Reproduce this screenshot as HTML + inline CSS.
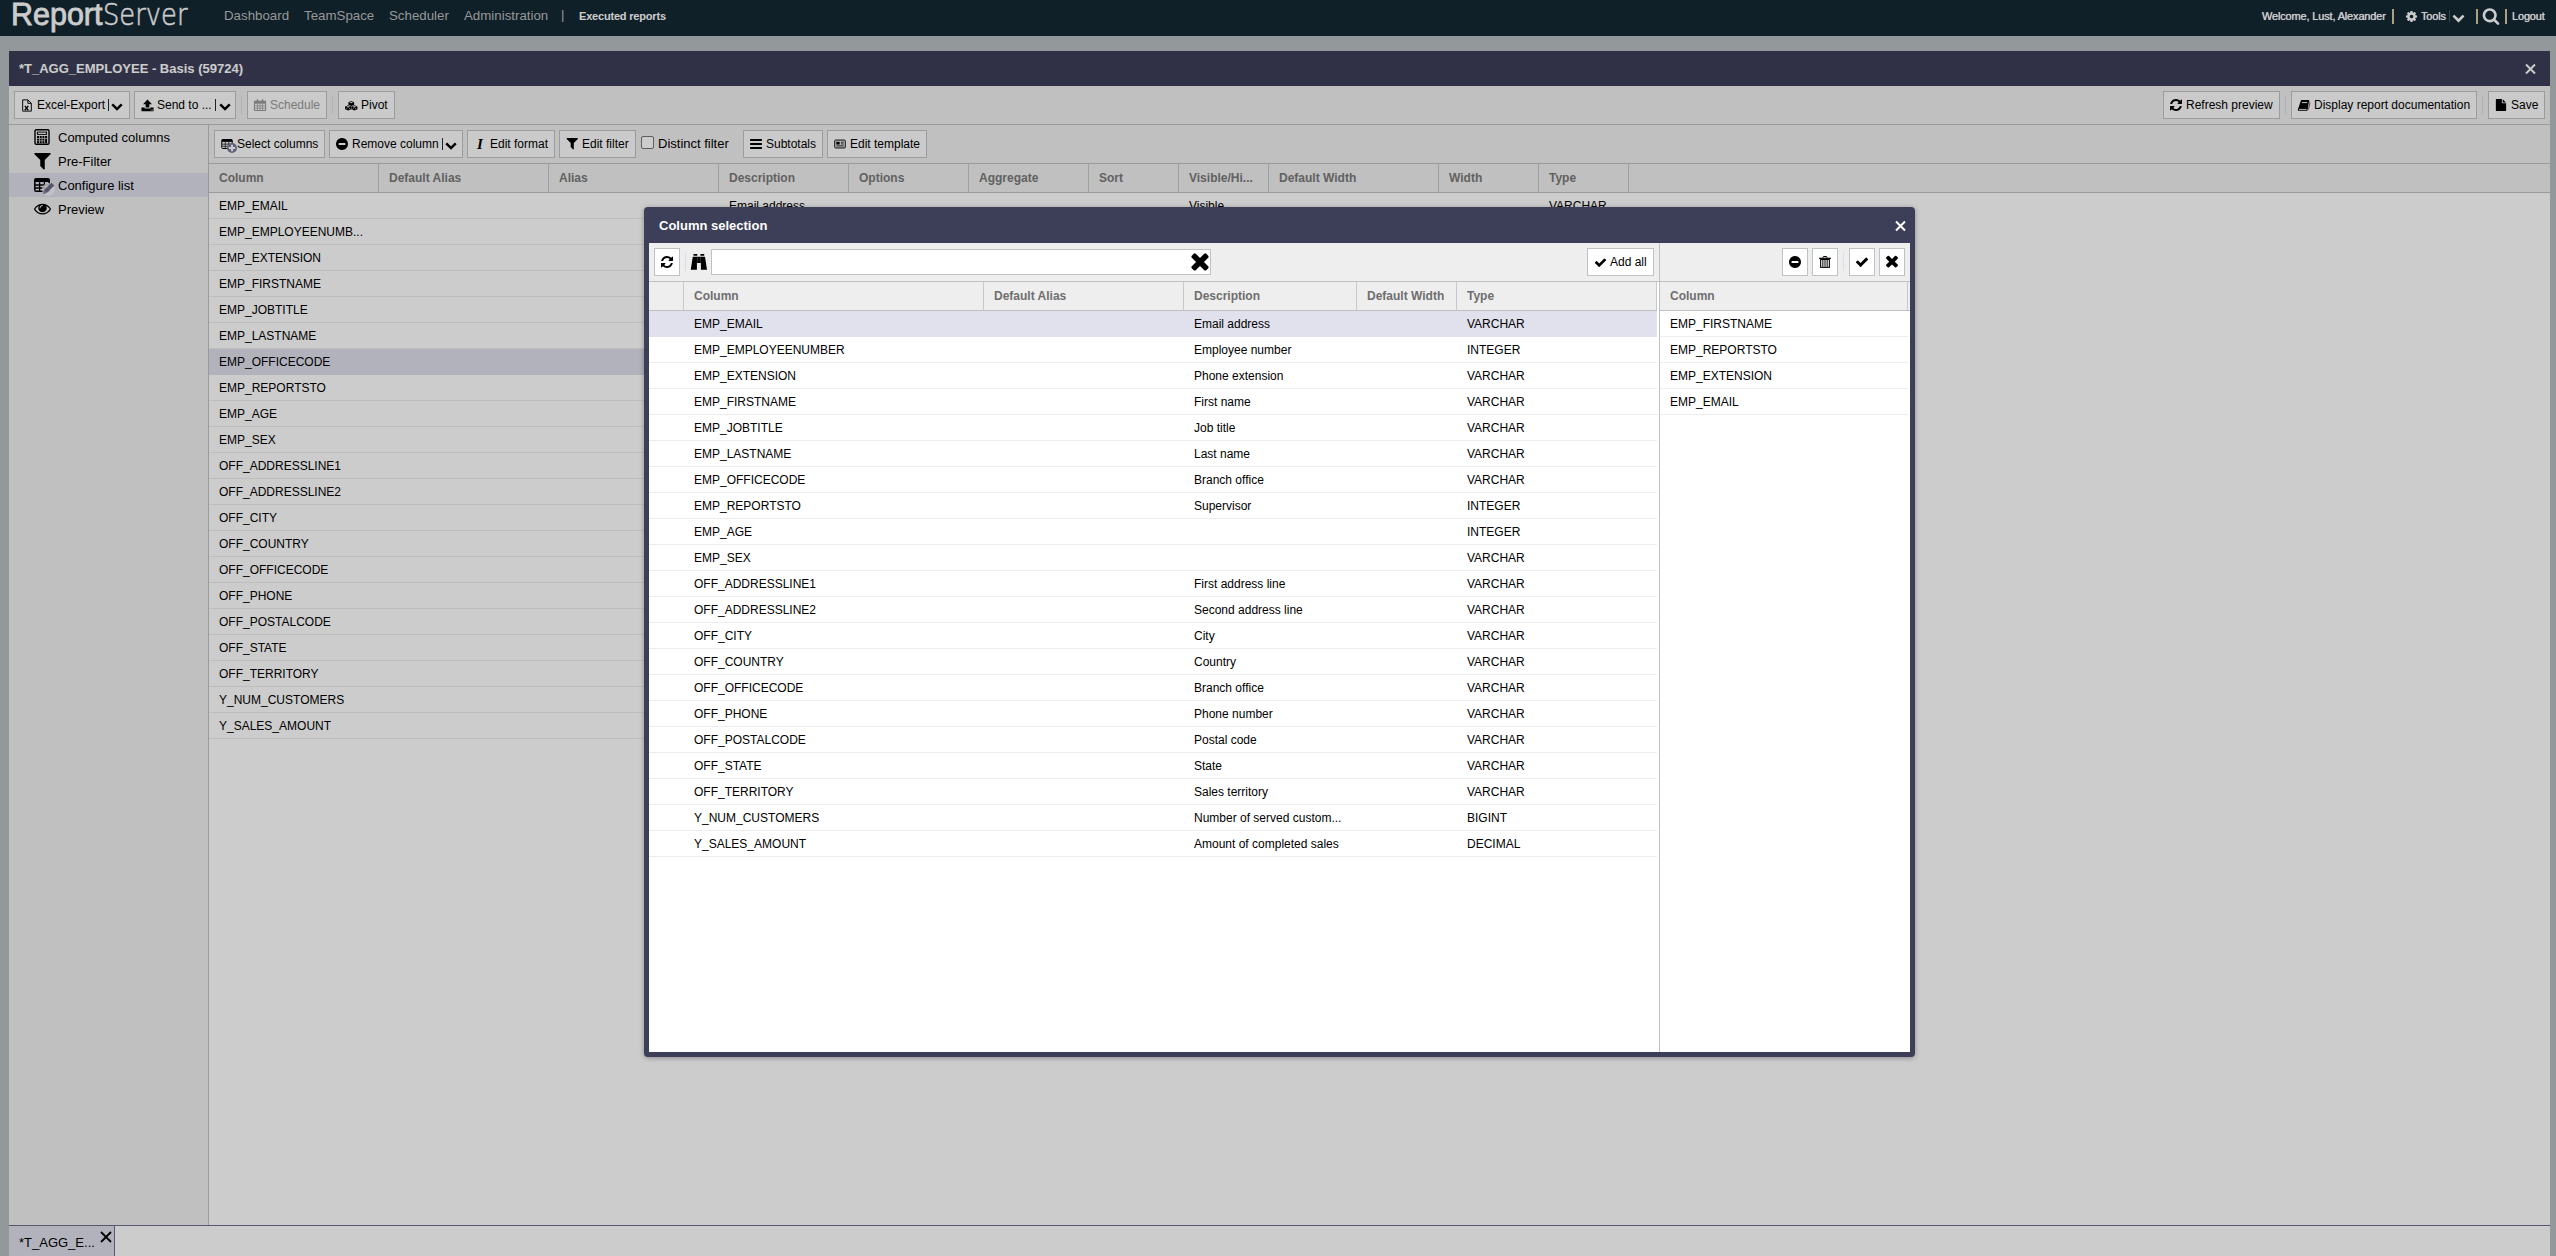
<!DOCTYPE html><html><head><meta charset="utf-8"><title>ReportServer</title><style>
*{box-sizing:border-box;margin:0;padding:0}
html,body{width:2556px;height:1256px;overflow:hidden}
body{position:relative;background:#b8bec2;font:12px "Liberation Sans",sans-serif;color:#000}
div,span,svg{position:absolute}
.ic{display:block;overflow:visible}
.t{white-space:nowrap;line-height:16px;height:16px}
#hdr{left:0;top:0;width:2556px;height:36px;background:#132834}
#hdr .nav{font-size:13.300px;color:#bdbdbd;top:8px}
#hdr .w{font-size:11px;color:#fff;top:8px;letter-spacing:-.16px;text-shadow:0 0 .7px #fff}
#main{left:9px;top:51px;width:2541px;height:1205px;background:#fff}
#ttl{left:0;top:0;width:2541px;height:35px;background:#3d3e58}
#tb{left:0;top:35px;width:2541px;height:39px;background:#f0f0f0;border-bottom:1px solid #bfc2c4}
.btn{height:28px;border:1px solid #c0c5c9;background:#fdfdfd}
.btn.dis .t{color:#9a9a9a}
.sep{width:1px;background:#dcdce6}
#nav{left:0;top:74px;width:200px;height:1100px;background:#f0f0f0;border-right:1px solid #bfc2c4}
#nav .it{left:0;width:199px;height:24px}
#nav .it .t{left:49px;top:5px;font-size:13px}
#nav .sel{background:#dfdfec}
#ra{left:200px;top:74px;width:2341px;height:1100px;background:#fff}
#ratb{left:0;top:0;width:2341px;height:39px;background:#f0f0f0;border-bottom:1px solid #bfc2c4}
.gh{background:#f0f0f0;border-bottom:1px solid #bfc2c4;height:29px}
.gh .c{top:0;height:28px;border-right:1px solid #c6c9cb}
.gh .c .t{left:10px;top:6px;font-weight:bold;color:#7a7a7a}
.row{height:26px;border-bottom:1px solid #ededed}
.row .t{top:5px}
#tabs{left:0;top:1174px;width:2541px;height:31px;background:#fff;border-top:1px solid #6c6e8c}
#mask{left:0;top:0;width:2556px;height:1256px;background:rgba(0,0,0,.2)}
#dlg{left:644px;top:207px;width:1271px;height:850px;background:#3d3e58;border-radius:4px;box-shadow:0 1px 5px rgba(0,0,0,.32)}
#dbody{left:5px;top:36px;width:1261px;height:809px;background:#fff}
.dtb{top:0;height:39px;background:#eee;border-bottom:1px solid #bfc2c4}
.wb{height:28px;border:1px solid #bcc2c6;background:#fff}
</style></head><body>
<div id="hdr">
<span class="t" style="left:11px;top:-4px;height:36px;font:31.500px/36px 'Liberation Sans',sans-serif;color:#fff;-webkit-text-stroke:.8px #fff;transform-origin:0 50%;transform:scaleX(.967)">Report</span>
<span class="t" style="left:103px;top:-3px;height:36px;font:200 30.500px/36px 'DejaVu Sans','Liberation Sans',sans-serif;color:#fff;-webkit-text-stroke:.55px #fff;transform-origin:0 50%;transform:scaleX(.845)">Server</span>
<span class="t nav" style="left:224px">Dashboard</span>
<span class="t nav" style="left:304px">TeamSpace</span>
<span class="t nav" style="left:389px">Scheduler</span>
<span class="t nav" style="left:464px">Administration</span>
<span class="t nav" style="left:561px;top:7px">|</span>
<span class="t w" style="left:579px;top:8px;font-weight:bold;letter-spacing:-.19px;text-shadow:none">Executed reports</span>
<span class="t w" style="left:2262px">Welcome, Lust, Alexander</span>
<div style="left:2392px;top:9px;width:2px;height:15px;background:#d9c9a3"></div>
<svg class="ic" style="left:2405px;top:10px;width:13px;height:13px;" viewBox="0 0 1792 1792"><path fill="#fff" d="M1152 896q0-106-75-181t-181-75-181 75-75 181 75 181 181 75 181-75 75-181zm512-109v222q0 12-8 23t-20 13l-185 28q-19 54-39 91 35 50 107 138 10 12 10 25t-9 23q-27 37-99 108t-94 71q-12 0-26-9l-138-108q-44 23-91 38-16 136-29 186-7 28-36 28h-222q-14 0-24.500-8.500t-11.500-21.500l-28-184q-49-16-90-37l-141 107q-10 9-25 9-14 0-25-11-126-114-165-168-7-10-7-23 0-12 8-23 15-21 51-66.500t54-70.500q-27-50-41-99l-183-27q-13-2-21-12.500t-8-23.500v-222q0-12 8-23t19-13l186-28q14-46 39-92-40-57-107-138-10-12-10-24 0-10 9-23 26-36 98.500-107.500t94.500-71.500q13 0 26 10l138 107q44-23 91-38 16-136 29-186 7-28 36-28h222q14 0 24.500 8.500t11.500 21.500l28 184q49 16 90 37l142-107q9-9 24-9 13 0 25 10 129 119 165 170 7 8 7 22 0 12-8 23-15 21-51 66.500t-54 70.500q26 50 41 98l183 28q13 2 21 12.500t8 23.500z"/></svg>
<span class="t w" style="left:2421px">Tools</span>
<div style="left:2449px;top:10px;width:1px;height:12px;background:#41525c"></div>
<svg class="ic" style="left:2452px;top:11px;width:13px;height:13px;" viewBox="0 0 1792 1792"><path fill="#fff" d="M1683 808l-742 741q-19 19-45 19t-45-19l-742-741q-19-19-19-45.500t19-45.500l166-165q19-19 45-19t45 19l531 531 531-531q19-19 45-19t45 19l166 165q19 19 19 45.500t-19 45.500z"/></svg>
<div style="left:2476px;top:9px;width:2px;height:15px;background:#d9c9a3"></div>
<svg class="ic" style="left:2482px;top:7px;width:18px;height:18px;" viewBox="0 0 1792 1792"><path fill="#fff" d="M1216 832q0-185-131.500-316.500t-316.500-131.500-316.500 131.500-131.500 316.500 131.500 316.500 316.500 131.500 316.500-131.500 131.500-316.500zm512 832q0 52-38 90t-90 38q-54 0-90-38l-343-342q-179 124-399 124-143 0-273.500-55.500t-225-150-150-225-55.500-273.500 55.500-273.500 150-225 225-150 273.500-55.500 273.500 55.500 225 150 150 225 55.500 273.500q0 220-124 399l343 343q37 37 37 90z"/></svg>
<div style="left:2505px;top:9px;width:2px;height:15px;background:#d9c9a3"></div>
<span class="t w" style="left:2512px">Logout</span>
</div>
<div id="main">
<div id="ttl"><span class="t" style="left:10px;top:10px;font-size:13px;font-weight:bold;color:#fff">*T_AGG_EMPLOYEE - Basis (59724)</span>
<svg class="ic" style="left:2516px;top:13px;width:11px;height:10px;" viewBox="0 0 11 10"><path d="M1 .5l9 9M10 .5l-9 9" stroke="#fff" stroke-width="2"/></svg>
</div>
<div id="tb">
<div class="btn" style="left:5px;top:5px;width:116px"><svg class="ic" style="left:6px;top:7px;width:12px;height:13px;" viewBox="1 .5 13 15"><path d="M2.5 1.5h6l4 4v9h-10z" fill="none" stroke="#000" stroke-width="1.1"/><path d="M8.5 1.5v4h4" fill="none" stroke="#000" stroke-width="1.1"/><path d="M5 8.5l4 5M9 8.5l-4 5" stroke="#000" stroke-width="1.5"/></svg><span class="t" style="left:22px;top:5px">Excel-Export</span><div style="left:93px;top:7px;width:1px;height:12px;background:#2a2a2a"></div><svg class="ic" style="left:96px;top:11px;width:12px;height:8.2px;" viewBox="0 0 12.500 8.500"><path d="M1.300 1.300L6.250 6.300l4.950-5" fill="none" stroke="#000" stroke-width="2.600"/></svg></div>
<div class="btn" style="left:125px;top:5px;width:102px"><svg class="ic" style="left:6px;top:7px;width:13px;height:13px;" viewBox="1 1 14 14"><path d="M8 1.500l4.800 5.200H10v3.500H6v-3.500H3.200z" fill="#000"/><path d="M1.500 10.100h3.400v1.200h6.200v-1.200h3.400v4.100h-13z" fill="#000"/><rect x="11.300" y="12.400" width="1.100" height=".9" fill="#ddd"/><rect x="12.900" y="12.400" width="1.100" height=".9" fill="#ddd"/></svg><span class="t" style="left:22px;top:5px">Send to ...</span><div style="left:80px;top:7px;width:1px;height:12px;background:#2a2a2a"></div><svg class="ic" style="left:83.6px;top:11px;width:12px;height:8.2px;" viewBox="0 0 12.500 8.500"><path d="M1.300 1.300L6.250 6.300l4.950-5" fill="none" stroke="#000" stroke-width="2.600"/></svg></div>
<div class="sep" style="left:232px;top:10px;height:18px"></div>
<div class="btn dis" style="left:238px;top:5px;width:80px"><svg class="ic" style="left:6px;top:7px;width:12px;height:12px;" viewBox="1 1 14 14"><path d="M1.5 3.5h13v11h-13z" fill="none" stroke="#9a9a9a" stroke-width="1.2"/><rect x="1.5" y="3.5" width="13" height="3" fill="#9a9a9a"/><rect x="4" y="1.3" width="2" height="3.4" rx=".8" fill="#9a9a9a"/><rect x="10" y="1.3" width="2" height="3.4" rx=".8" fill="#9a9a9a"/><path d="M1.5 9h13M1.5 11.7h13M5 6.5v8M8 6.5v8M11 6.5v8" stroke="#9a9a9a" stroke-width=".9"/></svg><span class="t" style="left:22px;top:5px">Schedule</span></div>
<div class="sep" style="left:323px;top:10px;height:18px"></div>
<div class="btn" style="left:329px;top:5px;width:57px"><svg class="ic" style="left:6px;top:8.5px;width:12.5px;height:9.5px;" viewBox="0 0 24 18"><path d="M12.0 0.0L17.5 2.2L17.5 7.2L12.0 9.5L6.5 7.2L6.5 2.2z" fill="#000"/><path d="M12.0 1.2L15.7 2.6L12.0 4.1L8.3 2.6z" fill="#e8f0f8"/><path d="M6.0 8.0L11.8 10.3L11.8 15.6L6.0 18.0L0.2 15.6L0.2 10.3z" fill="#000"/><path d="M6.0 9.3L9.9 10.7L6.0 12.3L2.1 10.7z" fill="#e8f0f8"/><path d="M18.0 8.0L23.8 10.3L23.8 15.6L18.0 18.0L12.2 15.6L12.2 10.3z" fill="#000"/><path d="M18.0 9.3L21.9 10.7L18.0 12.3L14.1 10.7z" fill="#e8f0f8"/><path d="M2.6 15.2L4.6 13.5M7.4 15.5L9.4 13.5" stroke="#dde6ee" stroke-width="1.500" fill="none"/><path d="M14.6 15.2L16.6 13.5M19.4 15.5L21.4 13.5" stroke="#dde6ee" stroke-width="1.500" fill="none"/></svg><span class="t" style="left:22px;top:5px">Pivot</span></div>
<div class="btn" style="left:2154px;top:5px;width:117px"><svg class="ic" style="left:4.8px;top:6.4px;width:14px;height:14px;" viewBox="0 0 1792 1792"><path fill="#000" d="M1639 1056q0 5-1 7-64 268-268 434.500t-478 166.500q-146 0-282.500-55t-243.500-157l-129 129q-19 19-45 19t-45-19-19-45v-448q0-26 19-45t45-19h448q26 0 45 19t19 45-19 45l-137 137q71 66 161 102t187 36q134 0 250-65t186-179q11-17 53-117 8-23 30-23h192q13 0 22.500 9.500t9.500 22.500zm25-800v448q0 26-19 45t-45 19h-448q-26 0-45-19t-19-45 19-45l138-138q-148-137-349-137-134 0-250 65t-186 179q-11 17-53 117-8 23-30 23h-199q-13 0-22.500-9.500t-9.500-22.500v-7q65-268 270-434.500t480-166.500q146 0 284 55.500t245 156.500l130-129q19-19 45-19t45 19 19 45z"/></svg><span class="t" style="left:22px;top:5px">Refresh preview</span></div>
<div class="sep" style="left:2276px;top:10px;height:18px"></div>
<div class="btn" style="left:2282px;top:5px;width:186px"><svg class="ic" style="left:5px;top:7px;width:14px;height:13px;" viewBox="0 0 14 13"><path d="M4.100 1H12.200L10.400 11.800H1.600Q.5 11.800 .9 10.500z" fill="#000"/><rect x="5" y="3.100" width="5.200" height="1" fill="#fdfdfd"/><rect x="2" y="9.900" width="7.600" height=".9" fill="#fdfdfd"/><path d="M12.400 2.600Q13 3.200 12.700 5L11.400 10.600" fill="none" stroke="#000" stroke-width=".6"/></svg><span class="t" style="left:22px;top:5px">Display report documentation</span></div>
<div class="sep" style="left:2473px;top:10px;height:18px"></div>
<div class="btn" style="left:2479px;top:5px;width:57px"><svg class="ic" style="left:6px;top:7px;width:12px;height:12px;" viewBox="0 0 1792 1792"><path fill="#000" d="M1152 512v-472q22 14 36 28l408 408q14 14 28 36h-472zm-128 32q0 40 28 68t68 28h544v1056q0 40-28 68t-68 28h-1344q-40 0-68-28t-28-68v-1600q0-40 28-68t68-28h800v544z"/></svg><span class="t" style="left:22px;top:5px">Save</span></div>
</div>
<div id="nav">
<div class="it" style="top:0"><svg class="ic" style="left:25px;top:4px;width:16px;height:16px;" viewBox="0 0 16 16"><rect x="1" y=".8" width="14" height="14.400" rx="1.200" fill="none" stroke="#000" stroke-width="1.400"/><rect x="3.400" y="3.100" width="9.200" height="2.300" fill="none" stroke="#000" stroke-width=".9"/><g fill="#000"><rect x="3" y="7" width="2" height="2"/><rect x="5.700" y="7" width="2" height="2"/><rect x="8.400" y="7" width="2" height="2"/><rect x="11.100" y="7" width="2" height="2"/><rect x="3" y="9.600" width="2" height="2"/><rect x="5.700" y="9.600" width="2" height="2"/><rect x="8.400" y="9.600" width="2" height="2"/><rect x="11.100" y="9.600" width="2" height="4.600"/><rect x="3" y="12.200" width="2" height="2"/><rect x="5.700" y="12.200" width="2" height="2"/><rect x="8.400" y="12.200" width="2" height="2"/></g></svg><span class="t">Computed columns</span></div>
<div class="it" style="top:24px"><svg class="ic" style="left:23px;top:1px;width:21px;height:21px;" viewBox="0 0 1792 1792"><path fill="#000" d="M1595 295q17 41-14 70l-493 493v742q0 42-39 59-13 5-25 5-27 0-45-19l-256-256q-19-19-19-45v-486l-493-493q-31-29-14-70 17-39 59-39h1280q42 0 59 39z"/></svg><span class="t">Pre-Filter</span></div>
<div class="it sel" style="top:48px"><svg class="ic" style="left:25px;top:4px;width:16px;height:16px;" viewBox="0 0 16 16"><rect x=".8" y="1.800" width="14.400" height="12.400" rx="1.300" fill="none" stroke="#000" stroke-width="1.500"/><rect x=".8" y="1.800" width="14.400" height="3.200" fill="#000"/><path d="M.8 8h14.400M.8 11h14.400M5.600 5v9M10.400 5v9" stroke="#000" stroke-width="1.300"/></svg><svg class="ic" style="left:33px;top:9px;width:13px;height:13px;" viewBox="0 0 13 13"><circle cx="6.500" cy="7.500" r="6.500" fill="#f4f4fa" opacity=".8"/><path d="M1 12l1.200-4L9.500.700l2.800 2.800L5 10.800z" fill="#6a6a86"/><path d="M1 12l1.200-4 2.800 2.800z" fill="#8c8ca4"/></svg><span class="t">Configure list</span></div>
<div class="it" style="top:72px"><svg class="ic" style="left:25px;top:3px;width:17px;height:17px;" viewBox="0 0 1792 1792"><path fill="#000" d="M1664 960q-152-236-381-353 61 104 61 225 0 185-131.500 316.500t-316.500 131.500-316.500-131.500-131.500-316.500q0-121 61-225-229 117-381 353 133 205 333.500 326.500t434.500 121.500 434.500-121.500 333.500-326.500zm-720-384q0-20-14-34t-34-14q-125 0-214.500 89.500t-89.500 214.500q0 20 14 34t34 14 34-14 14-34q0-86 61-147t147-61q20 0 34-14t14-34zm848 384q0 34-20 69-140 230-376.500 368.500t-499.500 138.500-499.500-139-376.500-368q-20-35-20-69t20-69q140-229 376.500-368t499.500-139 499.500 139 376.500 368q20 35 20 69z"/></svg><span class="t">Preview</span></div>
</div>
<div id="ra">
<div id="ratb">
<div class="btn" style="left:5px;top:5px;width:111px"><svg class="ic" style="left:6px;top:8px;width:12px;height:10px;" viewBox="0 1 16 14"><rect x=".7" y="1.700" width="14.600" height="12.600" rx="1.200" fill="none" stroke="#000" stroke-width="1.400"/><rect x=".7" y="1.700" width="14.600" height="3.300" fill="#000"/><path d="M.7 8.200h14.600M.7 11.200h14.600M5.600 5v9M10.400 5v9" stroke="#000" stroke-width="1"/></svg><svg class="ic" style="left:12px;top:12px;width:10px;height:10px;" viewBox="0 0 10 10"><circle cx="5" cy="5" r="5" fill="#7a7a9c"/><path d="M5 1.800v6.400M1.800 5h6.400" stroke="#fff" stroke-width="1.900"/></svg><span class="t" style="left:22px;top:5px">Select columns</span></div>
<div class="btn" style="left:120px;top:5px;width:134px"><svg class="ic" style="left:5px;top:6px;width:14px;height:14px;" viewBox="0 0 1792 1792"><path fill="#000" d="M1344 960v-128q0-26-19-45t-45-19h-768q-26 0-45 19t-19 45v128q0 26 19 45t45 19h768q26 0 45-19t19-45zm320-64q0 209-103 385.500t-279.500 279.500-385.500 103-385.500-103-279.500-279.500-103-385.500 103-385.500 279.500-279.500 385.500-103 385.500 103 279.500 279.500 103 385.500z"/></svg><span class="t" style="left:22px;top:5px">Remove column</span><div style="left:112px;top:7px;width:1px;height:12px;background:#2a2a2a"></div><svg class="ic" style="left:115px;top:11px;width:12px;height:8.2px;" viewBox="0 0 12.500 8.500"><path d="M1.300 1.300L6.250 6.300l4.950-5" fill="none" stroke="#000" stroke-width="2.600"/></svg></div>
<div class="btn" style="left:258px;top:5px;width:88px"><span class="t" style="left:9px;top:5px;font:italic bold 15px 'Liberation Serif',serif">I</span><span class="t" style="left:22px;top:5px">Edit format</span></div>
<div class="btn" style="left:350px;top:5px;width:77px"><svg class="ic" style="left:4.7px;top:5px;width:14.5px;height:14.5px;" viewBox="0 0 1792 1792"><path fill="#000" d="M1595 295q17 41-14 70l-493 493v742q0 42-39 59-13 5-25 5-27 0-45-19l-256-256q-19-19-19-45v-486l-493-493q-31-29-14-70 17-39 59-39h1280q42 0 59 39z"/></svg><span class="t" style="left:22px;top:5px">Edit filter</span></div>
<div style="left:432px;top:11px;width:13px;height:13px;border:1px solid #767676;border-radius:2px;background:#fff"></div>
<span class="t" style="left:449px;top:11px;font-size:13px">Distinct filter</span>
<div class="btn" style="left:534px;top:5px;width:80px"><svg class="ic" style="left:5px;top:6px;width:14px;height:14px;" viewBox="0 0 1792 1792"><path fill="#000" d="M1664 1344v128q0 26-19 45t-45 19h-1408q-26 0-45-19t-19-45v-128q0-26 19-45t45-19h1408q26 0 45 19t19 45zm0-512v128q0 26-19 45t-45 19h-1408q-26 0-45-19t-19-45v-128q0-26 19-45t45-19h1408q26 0 45 19t19 45zm0-512v128q0 26-19 45t-45 19h-1408q-26 0-45-19t-19-45v-128q0-26 19-45t45-19h1408q26 0 45 19t19 45z"/></svg><span class="t" style="left:22px;top:5px">Subtotals</span></div>
<div class="btn" style="left:618px;top:5px;width:100px"><svg class="ic" style="left:5.75px;top:7.25px;width:12px;height:12px;" viewBox="0 1 16 14.500"><rect x="1" y="3" width="14" height="10.500" rx="1" fill="none" stroke="#000" stroke-width="1.300"/><rect x="3" y="5.200" width="4.600" height="3.800" fill="#000"/><path d="M9 5.800h4M9 8.200h4M3 10.800h10" stroke="#000" stroke-width="1.200"/></svg><span class="t" style="left:22px;top:5px">Edit template</span></div>
</div>
<div class="gh" style="left:0;top:39px;width:2341px">
<div class="c" style="left:0px;width:170px"><span class="t">Column</span></div>
<div class="c" style="left:170px;width:170px"><span class="t">Default Alias</span></div>
<div class="c" style="left:340px;width:170px"><span class="t">Alias</span></div>
<div class="c" style="left:510px;width:130px"><span class="t">Description</span></div>
<div class="c" style="left:640px;width:120px"><span class="t">Options</span></div>
<div class="c" style="left:760px;width:120px"><span class="t">Aggregate</span></div>
<div class="c" style="left:880px;width:90px"><span class="t">Sort</span></div>
<div class="c" style="left:970px;width:90px"><span class="t">Visible/Hi...</span></div>
<div class="c" style="left:1060px;width:170px"><span class="t">Default Width</span></div>
<div class="c" style="left:1230px;width:100px"><span class="t">Width</span></div>
<div class="c" style="left:1330px;width:90px"><span class="t">Type</span></div>
</div>
<div class="row" style="left:0;top:68px;width:1419px"><span class="t" style="left:10px">EMP_EMAIL</span><span class="t" style="left:520px">Email address</span><span class="t" style="left:980px">Visible</span><span class="t" style="left:1340px">VARCHAR</span></div>
<div class="row" style="left:0;top:94px;width:1419px"><span class="t" style="left:10px">EMP_EMPLOYEENUMB...</span></div>
<div class="row" style="left:0;top:120px;width:1419px"><span class="t" style="left:10px">EMP_EXTENSION</span></div>
<div class="row" style="left:0;top:146px;width:1419px"><span class="t" style="left:10px">EMP_FIRSTNAME</span></div>
<div class="row" style="left:0;top:172px;width:1419px"><span class="t" style="left:10px">EMP_JOBTITLE</span></div>
<div class="row" style="left:0;top:198px;width:1419px"><span class="t" style="left:10px">EMP_LASTNAME</span></div>
<div class="row" style="left:0;top:224px;width:1419px;background:#dfdfec;border-bottom-color:#dfdfec"><span class="t" style="left:10px">EMP_OFFICECODE</span></div>
<div class="row" style="left:0;top:250px;width:1419px"><span class="t" style="left:10px">EMP_REPORTSTO</span></div>
<div class="row" style="left:0;top:276px;width:1419px"><span class="t" style="left:10px">EMP_AGE</span></div>
<div class="row" style="left:0;top:302px;width:1419px"><span class="t" style="left:10px">EMP_SEX</span></div>
<div class="row" style="left:0;top:328px;width:1419px"><span class="t" style="left:10px">OFF_ADDRESSLINE1</span></div>
<div class="row" style="left:0;top:354px;width:1419px"><span class="t" style="left:10px">OFF_ADDRESSLINE2</span></div>
<div class="row" style="left:0;top:380px;width:1419px"><span class="t" style="left:10px">OFF_CITY</span></div>
<div class="row" style="left:0;top:406px;width:1419px"><span class="t" style="left:10px">OFF_COUNTRY</span></div>
<div class="row" style="left:0;top:432px;width:1419px"><span class="t" style="left:10px">OFF_OFFICECODE</span></div>
<div class="row" style="left:0;top:458px;width:1419px"><span class="t" style="left:10px">OFF_PHONE</span></div>
<div class="row" style="left:0;top:484px;width:1419px"><span class="t" style="left:10px">OFF_POSTALCODE</span></div>
<div class="row" style="left:0;top:510px;width:1419px"><span class="t" style="left:10px">OFF_STATE</span></div>
<div class="row" style="left:0;top:536px;width:1419px"><span class="t" style="left:10px">OFF_TERRITORY</span></div>
<div class="row" style="left:0;top:562px;width:1419px"><span class="t" style="left:10px">Y_NUM_CUSTOMERS</span></div>
<div class="row" style="left:0;top:588px;width:1419px"><span class="t" style="left:10px">Y_SALES_AMOUNT</span></div>
</div>
<div id="tabs"><div style="left:0;top:0;width:106px;height:30px;background:#dfdfec;border-right:1px solid #6c6e8c"><span class="t" style="left:10px;top:9px;font-size:13px">*T_AGG_E...</span>
<svg class="ic" style="left:91px;top:5px;width:12px;height:12px;" viewBox="0 0 12 12"><path d="M1 1l10 10M11 1L1 11" stroke="#000" stroke-width="1.800"/></svg>
</div></div>
</div>
<div id="mask"></div>
<div id="dlg">
<span class="t" style="left:15px;top:11px;font-size:13px;font-weight:bold;color:#fff">Column selection</span>
<svg class="ic" style="left:1251px;top:14px;width:11px;height:10px;" viewBox="0 0 11 10"><path d="M1 .5l9 9M10 .5l-9 9" stroke="#fff" stroke-width="2"/></svg>
<div id="dbody">
<div class="dtb" style="left:0;width:1010px">
<div class="wb" style="left:5px;top:5px;width:26px"><svg class="ic" style="left:5px;top:6px;width:14px;height:14px;" viewBox="0 0 1792 1792"><path fill="#000" d="M1639 1056q0 5-1 7-64 268-268 434.500t-478 166.500q-146 0-282.500-55t-243.500-157l-129 129q-19 19-45 19t-45-19-19-45v-448q0-26 19-45t45-19h448q26 0 45 19t19 45-19 45l-137 137q71 66 161 102t187 36q134 0 250-65t186-179q11-17 53-117 8-23 30-23h192q13 0 22.500 9.500t9.500 22.500zm25-800v448q0 26-19 45t-45 19h-448q-26 0-45-19t-19-45 19-45l138-138q-148-137-349-137-134 0-250 65t-186 179q-11 17-53 117-8 23-30 23h-199q-13 0-22.500-9.500t-9.500-22.500v-7q65-268 270-434.500t480-166.500q146 0 284 55.500t245 156.500l130-129q19-19 45-19t45 19 19 45z"/></svg></div>
<div class="sep" style="left:36px;top:10px;height:18px"></div>
<svg class="ic" style="left:41px;top:10px;width:18px;height:18px;" viewBox="0 0 18 18"><path d="M2.750 3.750H15L17 16.750H10.900V10H6.900V16.750H.750z" fill="#000"/><rect x="3.500" y="1" width="3.800" height="1.750" fill="#000"/><rect x="10.400" y="1" width="3.800" height="1.750" fill="#000"/><path d="M7.400 4.500V9.600M10.400 4.500V9.600" stroke="#5a6a6a" stroke-width=".5"/></svg>
<div style="left:62px;top:6px;width:500px;height:26px;border:1px solid #bcc2c6;background:#fff"><svg class="ic" style="left:475px;top:-2.5px;width:26px;height:26px;" viewBox="0 0 1792 1792"><path fill="#000" d="M1490 1322q0 40-28 68l-136 136q-28 28-68 28t-68-28l-294-294-294 294q-28 28-68 28t-68-28l-136-136q-28-28-28-68t28-68l294-294-294-294q-28-28-28-68t28-68l136-136q28-28 68-28t68 28l294 294 294-294q28-28 68-28t68 28l136 136q28 28 28 68t-28 68l-294 294 294 294q28 28 28 68z"/></svg></div>
<div class="wb" style="left:938px;top:5px;width:67px"><svg class="ic" style="left:6px;top:7px;width:13px;height:13px;" viewBox="0 0 1792 1792"><path fill="#000" d="M1671 566q0 40-28 68l-724 724-136 136q-28 28-68 28t-68-28l-136-136-362-362q-28-28-28-68t28-68l136-136q28-28 68-28t68 28l294 295 656-657q28-28 68-28t68 28l136 136q28 28 28 68z"/></svg><span class="t" style="left:22px;top:5px">Add all</span></div>
</div>
<div style="left:1010px;top:0;width:1px;height:809px;background:#bfc2c4"></div>
<div class="dtb" style="left:1011px;width:250px">
<div class="wb" style="left:122px;top:5px;width:26px"><svg class="ic" style="left:5px;top:6px;width:14px;height:14px;" viewBox="0 0 1792 1792"><path fill="#000" d="M1344 960v-128q0-26-19-45t-45-19h-768q-26 0-45 19t-19 45v128q0 26 19 45t45 19h768q26 0 45-19t19-45zm320-64q0 209-103 385.500t-279.500 279.500-385.500 103-385.500-103-279.500-279.500-103-385.500 103-385.500 279.500-279.500 385.500-103 385.500 103 279.500 279.500 103 385.500z"/></svg></div>
<div class="wb" style="left:152px;top:5px;width:26px"><svg class="ic" style="left:6px;top:7px;width:12px;height:12px;" viewBox="0 0 12 12"><path d="M4 1.800V1.300Q4 .5 4.800 .5H7.200Q8 .5 8 1.300V1.800" fill="none" stroke="#000" stroke-width="1"/><rect x=".1" y="1.700" width="11.800" height="1.200" fill="#000"/><rect x="1.100" y="2.800" width="9.800" height="9.100" fill="#000"/><rect x="2.200" y="4" width="7.600" height="6.800" fill="#fff"/><path d="M3.850 4V10.800M6 4V10.800M8.150 4V10.800" stroke="#000" stroke-width="1"/></svg></div>
<div class="sep" style="left:183px;top:10px;height:18px"></div>
<div class="wb" style="left:189px;top:5px;width:26px"><svg class="ic" style="left:5px;top:6px;width:14px;height:14px;" viewBox="0 0 1792 1792"><path fill="#000" d="M1671 566q0 40-28 68l-724 724-136 136q-28 28-68 28t-68-28l-136-136-362-362q-28-28-28-68t28-68l136-136q28-28 68-28t68 28l294 295 656-657q28-28 68-28t68 28l136 136q28 28 28 68z"/></svg></div>
<div class="wb" style="left:219px;top:5px;width:26px"><svg class="ic" style="left:3.1px;top:2.7px;width:18px;height:18px;" viewBox="0 0 1792 1792"><path fill="#000" d="M1490 1322q0 40-28 68l-136 136q-28 28-68 28t-68-28l-294-294-294 294q-28 28-68 28t-68-28l-136-136q-28-28-28-68t28-68l294-294-294-294q-28-28-28-68t28-68l136-136q28-28 68-28t68 28l294 294 294-294q28-28 68-28t68 28l136 136q28 28 28 68t-28 68l-294 294 294 294q28 28 28 68z"/></svg></div>
</div>
<div class="gh" style="left:0;top:39px;width:1008px;background:#eee">
<div class="c" style="left:0px;width:35px"><span class="t" style="color:#6e6e6e"></span></div>
<div class="c" style="left:35px;width:300px"><span class="t" style="color:#6e6e6e">Column</span></div>
<div class="c" style="left:335px;width:200px"><span class="t" style="color:#6e6e6e">Default Alias</span></div>
<div class="c" style="left:535px;width:173px"><span class="t" style="color:#6e6e6e">Description</span></div>
<div class="c" style="left:708px;width:100px"><span class="t" style="color:#6e6e6e">Default Width</span></div>
<div class="c" style="left:808px;width:200px"><span class="t" style="color:#6e6e6e">Type</span></div>
</div>
<div class="row" style="left:0;top:68px;width:1008px;background:#e1e1ed;border-bottom-color:#e1e1ed"><span class="t" style="left:45px">EMP_EMAIL</span><span class="t" style="left:545px">Email address</span><span class="t" style="left:818px">VARCHAR</span></div>
<div class="row" style="left:0;top:94px;width:1008px"><span class="t" style="left:45px">EMP_EMPLOYEENUMBER</span><span class="t" style="left:545px">Employee number</span><span class="t" style="left:818px">INTEGER</span></div>
<div class="row" style="left:0;top:120px;width:1008px"><span class="t" style="left:45px">EMP_EXTENSION</span><span class="t" style="left:545px">Phone extension</span><span class="t" style="left:818px">VARCHAR</span></div>
<div class="row" style="left:0;top:146px;width:1008px"><span class="t" style="left:45px">EMP_FIRSTNAME</span><span class="t" style="left:545px">First name</span><span class="t" style="left:818px">VARCHAR</span></div>
<div class="row" style="left:0;top:172px;width:1008px"><span class="t" style="left:45px">EMP_JOBTITLE</span><span class="t" style="left:545px">Job title</span><span class="t" style="left:818px">VARCHAR</span></div>
<div class="row" style="left:0;top:198px;width:1008px"><span class="t" style="left:45px">EMP_LASTNAME</span><span class="t" style="left:545px">Last name</span><span class="t" style="left:818px">VARCHAR</span></div>
<div class="row" style="left:0;top:224px;width:1008px"><span class="t" style="left:45px">EMP_OFFICECODE</span><span class="t" style="left:545px">Branch office</span><span class="t" style="left:818px">VARCHAR</span></div>
<div class="row" style="left:0;top:250px;width:1008px"><span class="t" style="left:45px">EMP_REPORTSTO</span><span class="t" style="left:545px">Supervisor</span><span class="t" style="left:818px">INTEGER</span></div>
<div class="row" style="left:0;top:276px;width:1008px"><span class="t" style="left:45px">EMP_AGE</span><span class="t" style="left:545px"></span><span class="t" style="left:818px">INTEGER</span></div>
<div class="row" style="left:0;top:302px;width:1008px"><span class="t" style="left:45px">EMP_SEX</span><span class="t" style="left:545px"></span><span class="t" style="left:818px">VARCHAR</span></div>
<div class="row" style="left:0;top:328px;width:1008px"><span class="t" style="left:45px">OFF_ADDRESSLINE1</span><span class="t" style="left:545px">First address line</span><span class="t" style="left:818px">VARCHAR</span></div>
<div class="row" style="left:0;top:354px;width:1008px"><span class="t" style="left:45px">OFF_ADDRESSLINE2</span><span class="t" style="left:545px">Second address line</span><span class="t" style="left:818px">VARCHAR</span></div>
<div class="row" style="left:0;top:380px;width:1008px"><span class="t" style="left:45px">OFF_CITY</span><span class="t" style="left:545px">City</span><span class="t" style="left:818px">VARCHAR</span></div>
<div class="row" style="left:0;top:406px;width:1008px"><span class="t" style="left:45px">OFF_COUNTRY</span><span class="t" style="left:545px">Country</span><span class="t" style="left:818px">VARCHAR</span></div>
<div class="row" style="left:0;top:432px;width:1008px"><span class="t" style="left:45px">OFF_OFFICECODE</span><span class="t" style="left:545px">Branch office</span><span class="t" style="left:818px">VARCHAR</span></div>
<div class="row" style="left:0;top:458px;width:1008px"><span class="t" style="left:45px">OFF_PHONE</span><span class="t" style="left:545px">Phone number</span><span class="t" style="left:818px">VARCHAR</span></div>
<div class="row" style="left:0;top:484px;width:1008px"><span class="t" style="left:45px">OFF_POSTALCODE</span><span class="t" style="left:545px">Postal code</span><span class="t" style="left:818px">VARCHAR</span></div>
<div class="row" style="left:0;top:510px;width:1008px"><span class="t" style="left:45px">OFF_STATE</span><span class="t" style="left:545px">State</span><span class="t" style="left:818px">VARCHAR</span></div>
<div class="row" style="left:0;top:536px;width:1008px"><span class="t" style="left:45px">OFF_TERRITORY</span><span class="t" style="left:545px">Sales territory</span><span class="t" style="left:818px">VARCHAR</span></div>
<div class="row" style="left:0;top:562px;width:1008px"><span class="t" style="left:45px">Y_NUM_CUSTOMERS</span><span class="t" style="left:545px">Number of served custom...</span><span class="t" style="left:818px">BIGINT</span></div>
<div class="row" style="left:0;top:588px;width:1008px"><span class="t" style="left:45px">Y_SALES_AMOUNT</span><span class="t" style="left:545px">Amount of completed sales</span><span class="t" style="left:818px">DECIMAL</span></div>
<div class="gh" style="left:1011px;top:39px;width:250px;background:#eee"><div class="c" style="left:0;width:248px"><span class="t" style="color:#6e6e6e">Column</span></div></div>
<div class="row" style="left:1011px;top:68px;width:248px"><span class="t" style="left:10px">EMP_FIRSTNAME</span></div>
<div class="row" style="left:1011px;top:94px;width:248px"><span class="t" style="left:10px">EMP_REPORTSTO</span></div>
<div class="row" style="left:1011px;top:120px;width:248px"><span class="t" style="left:10px">EMP_EXTENSION</span></div>
<div class="row" style="left:1011px;top:146px;width:248px"><span class="t" style="left:10px">EMP_EMAIL</span></div>
</div></div>
</body></html>
